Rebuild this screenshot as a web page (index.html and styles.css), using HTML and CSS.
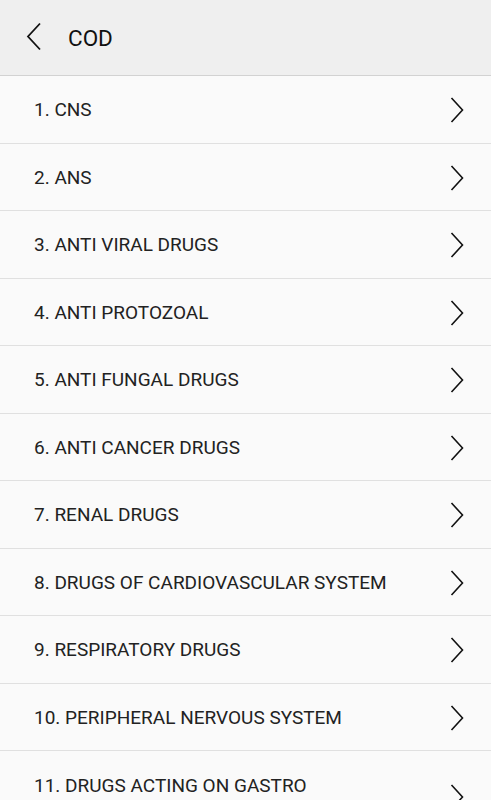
FILE: index.html
```html
<!DOCTYPE html>
<html lang="en">
<head>
  <meta charset="UTF-8" />
  <meta name="viewport" content="width=device-width, initial-scale=1.0"/>
  <title>COD</title>
  <link rel="stylesheet" href="styles.css">
</head>
<body>
  <div class="toolbar">
    <svg class="back" width="16" height="30" viewBox="0 0 16 30">
      <polyline points="14,1.5 2,14.5 14,27.5" fill="none" stroke="#111" stroke-width="1.8"/>
    </svg>
    <h1>COD</h1>
  </div>

  <ul class="list">
    <li><span>1. CNS</span><svg class="arrow" width="14" height="26" viewBox="0 0 14 26"><polyline points="1.5,1 12.5,13 1.5,25" fill="none" stroke="#111" stroke-width="1.6"/></svg></li>
    <li><span>2. ANS</span><svg class="arrow" width="14" height="26" viewBox="0 0 14 26"><polyline points="1.5,1 12.5,13 1.5,25" fill="none" stroke="#111" stroke-width="1.6"/></svg></li>
    <li><span>3. ANTI VIRAL DRUGS</span><svg class="arrow" width="14" height="26" viewBox="0 0 14 26"><polyline points="1.5,1 12.5,13 1.5,25" fill="none" stroke="#111" stroke-width="1.6"/></svg></li>
    <li><span>4. ANTI PROTOZOAL</span><svg class="arrow" width="14" height="26" viewBox="0 0 14 26"><polyline points="1.5,1 12.5,13 1.5,25" fill="none" stroke="#111" stroke-width="1.6"/></svg></li>
    <li><span>5. ANTI FUNGAL DRUGS</span><svg class="arrow" width="14" height="26" viewBox="0 0 14 26"><polyline points="1.5,1 12.5,13 1.5,25" fill="none" stroke="#111" stroke-width="1.6"/></svg></li>
    <li><span>6. ANTI CANCER DRUGS</span><svg class="arrow" width="14" height="26" viewBox="0 0 14 26"><polyline points="1.5,1 12.5,13 1.5,25" fill="none" stroke="#111" stroke-width="1.6"/></svg></li>
    <li><span>7. RENAL DRUGS</span><svg class="arrow" width="14" height="26" viewBox="0 0 14 26"><polyline points="1.5,1 12.5,13 1.5,25" fill="none" stroke="#111" stroke-width="1.6"/></svg></li>
    <li><span>8. DRUGS OF CARDIOVASCULAR SYSTEM</span><svg class="arrow" width="14" height="26" viewBox="0 0 14 26"><polyline points="1.5,1 12.5,13 1.5,25" fill="none" stroke="#111" stroke-width="1.6"/></svg></li>
    <li><span>9. RESPIRATORY DRUGS</span><svg class="arrow" width="14" height="26" viewBox="0 0 14 26"><polyline points="1.5,1 12.5,13 1.5,25" fill="none" stroke="#111" stroke-width="1.6"/></svg></li>
    <li><span>10. PERIPHERAL NERVOUS SYSTEM</span><svg class="arrow" width="14" height="26" viewBox="0 0 14 26"><polyline points="1.5,1 12.5,13 1.5,25" fill="none" stroke="#111" stroke-width="1.6"/></svg></li>
    <li class="tall"><span>11. DRUGS ACTING ON GASTRO<br>INTESTINAL TRACT</span><svg class="arrow" width="14" height="26" viewBox="0 0 14 26"><polyline points="1.5,1 12.5,13 1.5,25" fill="none" stroke="#111" stroke-width="1.6"/></svg></li>
  </ul>
</body>
</html>
```

FILE: styles.css
```css
body {
  margin: 0;
  font-family: Roboto, "Noto Sans", sans-serif;
  background: #fafafa;
  color: #222;
  overflow: hidden;
}

.toolbar {
  height: 75px;
  background: #efefef;
  border-bottom: 1px solid #d2d2d2;
  display: flex;
  align-items: center;
  padding-left: 26px;
}

.toolbar .back {
  margin-top: -2px;
}

.toolbar h1 {
  margin: 0 0 0 26px;
  font-size: 22.5px;
  font-weight: 400;
  color: #111;
}

.list {
  list-style: none;
  margin: 0;
  padding: 0;
}

.list li {
  box-sizing: border-box;
  height: 67.5px;
  border-bottom: 1px solid #e0e0e0;
  display: flex;
  align-items: center;
  justify-content: space-between;
  padding: 2px 27px 0 34px;
  font-size: 19px;
  line-height: 22px;
}

.list li.tall {
  height: 90px;
  padding-top: 3px;
}

.arrow {
  flex-shrink: 0;
}
```
